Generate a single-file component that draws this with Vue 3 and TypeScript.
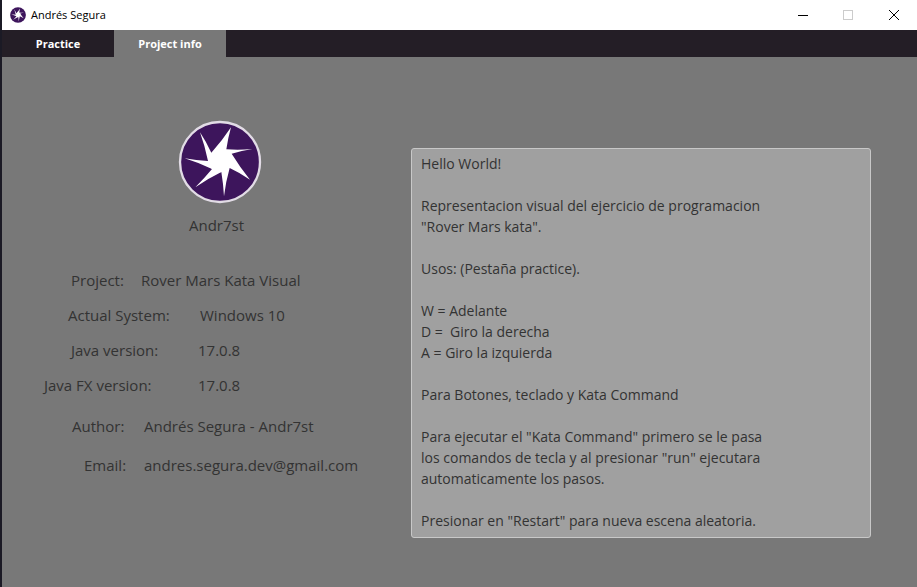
<script setup lang="ts">
import { ref } from 'vue'

interface InfoRow {
  label: string
  value: string
  kind: string
}

const tabs = ['Practice', 'Project info']
const active = ref('Project info')

const rows: InfoRow[] = [
  { label: 'Project:', value: 'Rover Mars Kata Visual', kind: 'project' },
  { label: 'Actual System:', value: 'Windows 10', kind: 'system' },
  { label: 'Java version:', value: '17.0.8', kind: 'java' },
  { label: 'Java FX version:', value: '17.0.8', kind: 'javafx' },
  { label: 'Author:', value: 'Andrés Segura - Andr7st', kind: 'author' },
  { label: 'Email:', value: 'andres.segura.dev@gmail.com', kind: 'email' },
]

const help = ref(`Hello World!

Representacion visual del ejercicio de programacion
"Rover Mars kata".

Usos: (Pestaña practice).

W = Adelante
D =  Giro la derecha
A = Giro la izquierda

Para Botones, teclado y Kata Command

Para ejecutar el "Kata Command" primero se le pasa
los comandos de tecla y al presionar "run" ejecutara
automaticamente los pasos.

Presionar en "Restart" para nueva escena aleatoria.`)

const blades =
  'M72 43 Q91 72 106 104 Q139 68 165 28 Q156 60 151 94 Q190 97 229 93 Q197 98 167 107 Q192 148 222 185 Q193 165 161 150 Q149 192 144 235 Q142 198 136 162 Q95 182 58 208 Q84 182 108 153 Q68 134 26 121 Q61 127 96 129 Q87 85 72 43 Z'
</script>

<template>
  <div class="window">
    <header class="titlebar">
      <svg class="app-icon" viewBox="6 6 252 252" aria-hidden="true">
        <circle cx="132" cy="132" r="124" fill="#3d155c" />
        <path :d="blades" fill="#fff" />
      </svg>
      <h1 class="title">Andrés Segura</h1>
      <div class="controls">
        <button type="button" class="control" aria-label="Minimize">
          <svg viewBox="0 0 12 12"><path d="M2 6.500H12" stroke="#000" /></svg>
        </button>
        <button type="button" class="control" aria-label="Maximize" disabled>
          <svg viewBox="0 0 12 12"><rect x="1.500" y="1.500" width="9" height="9" fill="none" stroke="#ccc" /></svg>
        </button>
        <button type="button" class="control" aria-label="Close">
          <svg viewBox="0 0 12 12"><path d="M1 1L11 11M11 1L1 11" stroke="#000" /></svg>
        </button>
      </div>
    </header>

    <nav class="tabs" role="tablist">
      <button
        v-for="tab in tabs"
        :key="tab"
        type="button"
        role="tab"
        class="tab"
        :class="{ active: tab === active }"
        :aria-selected="tab === active"
        @click="active = tab"
      >{{ tab }}</button>
    </nav>

    <main class="content">
      <section class="about">
        <figure class="brand">
          <svg class="logo" viewBox="6 6 252 252" aria-hidden="true">
            <circle cx="132" cy="132" r="120" fill="#3d155c" stroke="#e2dce6" stroke-width="7" />
            <circle cx="132" cy="129" r="34" fill="#fff" />
            <path :d="blades" fill="#fff" />
          </svg>
          <figcaption>Andr7st</figcaption>
        </figure>
        <dl class="info">
          <div v-for="row in rows" :key="row.kind" class="row" :class="row.kind">
            <dt>{{ row.label }}</dt>
            <dd>{{ row.value }}</dd>
          </div>
        </dl>
      </section>
      <textarea v-model="help" class="help" rows="18" readonly aria-label="Help"></textarea>
    </main>
  </div>
</template>

<style>
body {
  background: #787878;
}
</style>

<style scoped>
.window {
  box-sizing: border-box;
  display: flex;
  flex-direction: column;
  min-height: 100vh;
  border-left: 2px solid #1b1a25;
  background: #787878;
  color: #333;
  font-family: "Open Sans", "Noto Sans", sans-serif;
}

.titlebar {
  display: flex;
  align-items: center;
  height: 30px;
  padding-left: 8px;
  background: #fff;
}

.app-icon {
  width: 16px;
  height: 16px;
}

.title {
  flex: 1;
  margin: 0 0 0 5px;
  color: #000;
  font-size: 11px;
  font-weight: 400;
  line-height: 16px;
}

.controls {
  display: flex;
}

.control {
  display: flex;
  align-items: center;
  justify-content: center;
  width: 46px;
  height: 28px;
  padding: 0;
  border: 0;
  background: none;
}

.control svg {
  width: 12px;
  height: 12px;
}

.tabs {
  display: flex;
  height: 27px;
  background: #241e26;
}

.tab {
  width: 112px;
  padding: 0;
  border: 0;
  background: none;
  color: #fff;
  font: 700 11px/16px "Open Sans", "Noto Sans", sans-serif;
}

.tab.active {
  background: #787878;
}

.content {
  display: grid;
  grid-template-columns: minmax(0, 409fr) minmax(0, 506fr);
  align-items: start;
  flex: 1;
}

.about {
  padding-top: 63px;
  font-size: 15px;
  line-height: 22px;
}

.brand {
  display: grid;
  grid-template-columns: 84px;
  justify-content: start;
  gap: 10px;
  margin: 0;
  padding-left: 176px;
}

.brand figcaption {
  padding-left: 11px;
}

.logo {
  width: 84px;
  height: 84px;
}

.info {
  display: flex;
  flex-direction: column;
  gap: 13px;
  margin: 33px 0 0;
}

.row {
  display: grid;
}

dt,
dd {
  margin: 0;
  white-space: nowrap;
}

.project {
  grid-template-columns: 70px 1fr;
  padding-left: 69px;
}

.system {
  grid-template-columns: 132px 1fr;
  padding-left: 66px;
}

.java {
  grid-template-columns: 127px 1fr;
  padding-left: 69px;
}

.javafx {
  grid-template-columns: 154px 1fr;
  padding-left: 42px;
}

.author {
  grid-template-columns: 72px 1fr;
  margin-top: 6px;
  padding-left: 70px;
}

.email {
  grid-template-columns: 60px 1fr;
  margin-top: 4px;
  padding-left: 82px;
}

.help {
  display: block;
  box-sizing: border-box;
  margin: 91px 46px 0 0;
  padding: 4px 9px 6px;
  border: 1px solid #c8c8c8;
  border-radius: 3px;
  outline: 0;
  background: #a0a0a0;
  color: #333;
  font: 400 14px/21px "Open Sans", "Noto Sans", sans-serif;
  resize: none;
  overflow: hidden;
}
</style>
